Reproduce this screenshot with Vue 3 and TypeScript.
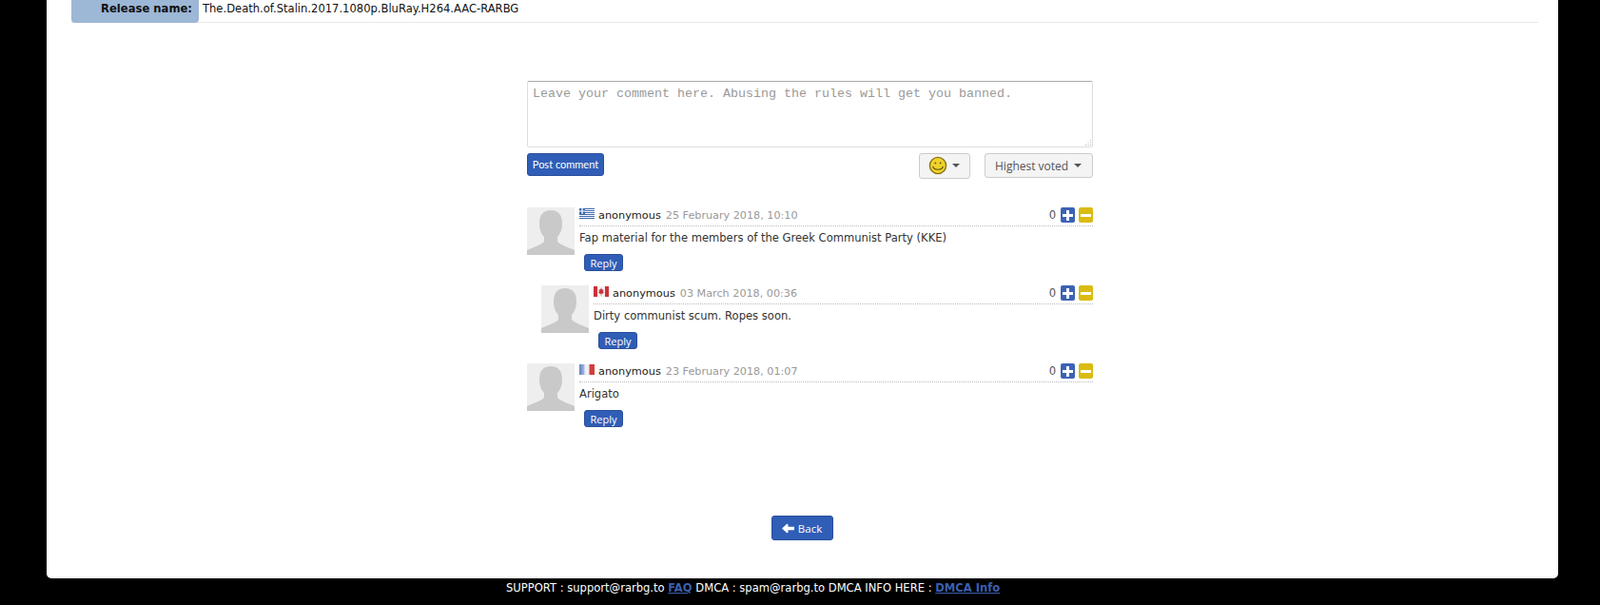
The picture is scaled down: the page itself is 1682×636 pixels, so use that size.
<script setup lang="ts">
type Flag = 'gr' | 'ca' | 'fr'

interface Comment {
  id: number
  flag: Flag
  date: string
  text: string
  nested?: boolean
}

const comments: Comment[] = [
  { id: 1, flag: 'gr', date: '25 February 2018, 10:10', text: 'Fap material for the members of the Greek Communist Party (KKE)' },
  { id: 2, flag: 'ca', date: '03 March 2018, 00:36', text: 'Dirty communist scum. Ropes soon.', nested: true },
  { id: 3, flag: 'fr', date: '23 February 2018, 01:07', text: 'Arigato' }
]
</script>

<template>
  <div class="page">
    <main class="panel">
      <div class="release-row">
        <div class="release-label">Release name:</div>
        <div class="release-value">The.Death.of.Stalin.2017.1080p.BluRay.H264.AAC-RARBG</div>
      </div>

      <section class="comments">
        <div class="box-wrap">
          <textarea class="comment-box" placeholder="Leave your comment here. Abusing the rules will get you banned."></textarea>
          <svg class="grip" width="8" height="8" viewBox="0 0 8 8">
            <path d="M6 1h1v1H6zM6 3.500h1v1H6zM6 6h1v1H6zM3.500 3.500h1v1h-1zM3.500 6h1v1h-1zM1 6h1v1H1z" fill="#aaa" />
          </svg>
        </div>
        <div class="form-actions">
          <button class="btn btn-blue post">Post comment</button>
          <div class="form-right">
            <button class="btn btn-light smile-btn">
              <svg width="20" height="20" viewBox="0 0 20 20">
                <circle cx="10" cy="10" r="8.600" fill="#f0d22c" stroke="#8a761a" stroke-width="1.400" />
                <circle cx="7.400" cy="7.400" r="0.900" fill="#5b4d10" />
                <circle cx="12.600" cy="7.400" r="0.900" fill="#5b4d10" />
                <path d="M4.600 10.800 C6 15.400 14 15.400 15.400 10.800" fill="none" stroke="#5b4d10" stroke-width="1.100" />
              </svg>
              <span class="caret"></span>
            </button>
            <button class="btn btn-light sort-btn">Highest voted <span class="caret"></span></button>
          </div>
        </div>

        <article v-for="c in comments" :key="c.id" class="comment" :class="{ nested: c.nested }">
          <div class="avatar">
            <svg width="50" height="50" viewBox="0 0 50 50">
              <rect width="50" height="50" fill="#eeeeee" />
              <path d="M25 3 C33 3 37 8 37 17 C37 23 35 28 32 31 L32 36 C36 40 44 42 50 45 L50 50 L0 50 L0 45 C6 42 14 40 18 36 L18 31 C15 28 13 23 13 17 C13 8 17 3 25 3 Z" fill="#c9c9c9" />
            </svg>
          </div>
          <div class="comment-body">
            <div class="comment-head">
              <svg v-if="c.flag === 'gr'" class="flag" width="16" height="11" viewBox="0 0 16 11">
                <rect width="16" height="11" fill="#fff" />
                <path d="M0 .5h16M6 2.500h10M6 4.500h10M0 6.500h16M0 8.500h16M0 10.500h16" stroke="#3f68ad" stroke-width="1" />
                <rect width="6" height="6" fill="#3f68ad" />
                <path d="M3 0v6M0 3h6" stroke="#fff" stroke-width="1.200" />
              </svg>
              <svg v-else-if="c.flag === 'ca'" class="flag" width="16" height="11" viewBox="0 0 16 11">
                <rect width="16" height="11" fill="#f6eeee" />
                <rect width="4" height="11" fill="#c9323a" />
                <rect x="12" width="4" height="11" fill="#c9323a" />
                <path d="M8 1.500 L9 3.800 L10.500 3.200 L10 6 L11.200 6.200 L9 8 L8.300 7.600 L8.300 9.500 L7.700 9.500 L7.700 7.600 L7 8 L4.800 6.200 L6 6 L5.500 3.200 L7 3.800 Z" fill="#c9323a" />
              </svg>
              <svg v-else class="flag" width="16" height="11" viewBox="0 0 16 11">
                <defs>
                  <linearGradient id="fr-left" x1="0" x2="1" y1="0" y2="0">
                    <stop offset="0" stop-color="#5f7fbd" />
                    <stop offset="1" stop-color="#a9bcdf" />
                  </linearGradient>
                </defs>
                <rect width="16" height="11" fill="#eef0f5" />
                <rect width="5.500" height="11" fill="url(#fr-left)" />
                <rect x="10.500" width="5.500" height="11" fill="#d33c3c" />
              </svg>
              <span class="author">anonymous</span>
              <span class="date">{{ c.date }}</span>
              <div class="votes">
                <span class="score">0</span>
                <button class="vote vote-up">
                  <svg width="11" height="11" viewBox="0 0 11 11"><path d="M4 0h3v4h4v3H7v4H4V7H0V4h4z" fill="#fff" /></svg>
                </button>
                <button class="vote vote-down">
                  <svg width="11" height="11" viewBox="0 0 11 11"><path d="M0 4h11v3H0z" fill="#fff" /></svg>
                </button>
              </div>
            </div>
            <p class="comment-text">{{ c.text }}</p>
            <button class="btn btn-blue reply">Reply</button>
          </div>
        </article>
      </section>

      <div class="back-wrap">
        <button class="btn btn-blue back">
          <svg width="13" height="11" viewBox="0 0 13 11"><path d="M0 5.500 L5.500 0.500 L6.500 1.500 L6.500 3.800 L13 3.800 L13 7.200 L6.500 7.200 L6.500 9.500 L5.500 10.500 Z" fill="#fff" /></svg>
          Back
        </button>
      </div>
    </main>

    <footer class="site-footer">
      SUPPORT : support@rarbg.to <a href="#">FAQ</a> DMCA : spam@rarbg.to DMCA INFO HERE : <a href="#">DMCA Info</a>
    </footer>
  </div>
</template>

<style>
html, body {
  background: #000;
  overflow: hidden;
}
</style>

<style scoped>
.page {
  font-family: "DejaVu Sans", Verdana, sans-serif;
  font-size: 11.55px;
  color: #333;
}

.panel {
  margin: 0 44px 0 49px;
  height: 608px;
  box-sizing: border-box;
  padding: 0 21px 0 26px;
  background: #fff;
  border-radius: 0 0 5px 5px;
}

.release-row {
  display: flex;
  height: 23px;
  border-bottom: 1px solid #e8e8e8;
}

.release-label {
  width: 134px;
  height: 24px;
  box-sizing: border-box;
  padding: 2px 7px 0 0;
  background: #9db7d6;
  border-radius: 0 0 4px 4px;
  text-align: right;
  font-weight: bold;
  font-size: 11.6px;
  line-height: 15px;
  color: #111;
}

.release-value {
  padding: 2px 0 0 4px;
  line-height: 15px;
  color: #111;
}

.comments {
  width: 595px;
  margin: 61px 0 0 479px;
}

.box-wrap {
  position: relative;
}

.grip {
  position: absolute;
  right: 1px;
  bottom: 1px;
}

.comment-box {
  display: block;
  width: 100%;
  height: 70px;
  box-sizing: border-box;
  padding: 5px 5px;
  border: 1px solid #ddd;
  border-top-color: #aaa;
  border-radius: 2px;
  font-family: "Liberation Mono", monospace;
  font-size: 13.33px;
  outline: none;
  resize: none;
}

.comment-box::placeholder {
  color: #9a9a9a;
}

.form-actions {
  display: flex;
  justify-content: space-between;
  align-items: flex-start;
  height: 27px;
  margin: 6px 0 30px;
}

.form-right {
  display: flex;
  gap: 15px;
}

.btn {
  box-sizing: border-box;
  border-radius: 3px;
  font-family: "Open Sans", sans-serif;
  cursor: pointer;
}

.btn-blue {
  display: block;
  background: #305db6;
  border: 1px solid #2a4f9c;
  color: #fff;
}

.btn-light {
  display: flex;
  align-items: center;
  background: #f4f4f4;
  border: 1px solid #ccc;
  color: #555;
  font-size: 12px;
}

.post {
  width: 81px;
  height: 24px;
  padding: 0 0 2px;
  font-family: Lato, sans-serif;
  font-size: 11px;
}

.smile-btn {
  width: 54px;
  height: 27px;
  padding: 0 0 1px 9px;
  gap: 5px;
}

.sort-btn {
  width: 114px;
  height: 26px;
  padding: 0 0 0 10px;
  gap: 6px;
}

.caret {
  width: 0;
  height: 0;
  border-top: 4px solid #555;
  border-left: 4px solid transparent;
  border-right: 4px solid transparent;
}

.comment {
  display: flex;
  height: 67px;
  margin-bottom: 15px;
}

.comment.nested {
  margin-left: 15px;
}

.avatar {
  width: 50px;
  height: 50px;
  flex-shrink: 0;
}

.avatar svg {
  display: block;
}

.comment-body {
  flex: 1;
  margin-left: 5px;
}

.comment-head {
  display: flex;
  align-items: flex-start;
  height: 19px;
  border-bottom: 1px dotted #bbb;
}

.flag {
  margin: 1px 4px 0 0;
}

.author {
  font-size: 11.3px;
  line-height: 15px;
  margin-top: 1px;
  color: #222;
}

.date {
  margin: 1px 0 0 5px;
  font-size: 11.2px;
  line-height: 15px;
  color: #999;
}

.votes {
  display: flex;
  align-items: center;
  gap: 4px;
  margin-left: auto;
}

.score {
  margin-right: 1px;
  color: #555;
}

.vote {
  display: flex;
  align-items: center;
  justify-content: center;
  width: 15px;
  height: 16px;
  padding: 0;
  border: none;
  border-radius: 2px;
}

.vote-up {
  background: #3c62b5;
}

.vote-down {
  background: #dabb12;
}

.comment-text {
  margin: 0;
  height: 29px;
  line-height: 25px;
}

.reply {
  width: 41px;
  height: 18px;
  margin-left: 5px;
  padding: 0;
  font-size: 11px;
}

.back-wrap {
  display: flex;
  justify-content: center;
  margin-top: 93px;
  padding-right: 6px;
}

.back {
  display: flex;
  align-items: center;
  justify-content: center;
  gap: 4px;
  width: 65px;
  height: 26px;
  padding: 0;
  font-size: 11.5px;
}

.site-footer {
  margin-left: 532px;
  padding-top: 3px;
  color: #fff;
}

.site-footer a {
  color: #3a5fb0;
  font-weight: bold;
}
</style>
